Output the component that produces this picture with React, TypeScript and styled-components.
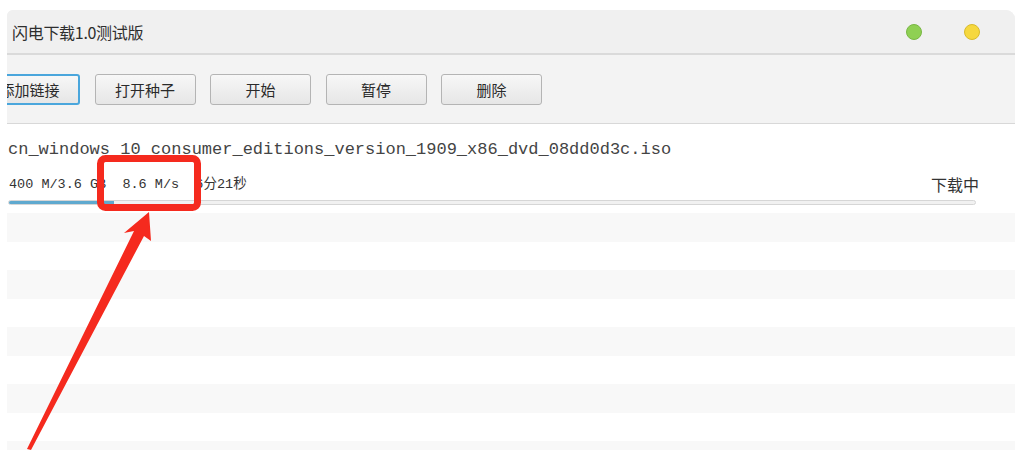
import * as React from 'react';
import styled, { createGlobalStyle } from 'styled-components';

const GlobalStyle = createGlobalStyle`
    html, body {
        margin: 0;
        padding: 0;
        background: #fff;
    }
    body {
        font-family: "Noto Sans CJK SC", "Liberation Sans", sans-serif;
    }
`;

const Page = styled.div`
    position: relative;
    width: 1023px;
    height: 450px;
    padding: 10px 0 0 7px;
    box-sizing: border-box;
    overflow: hidden;
`;

const Window = styled.div`
    width: 1008px;
    height: 440px;
    display: flex;
    flex-direction: column;
    background: #f2f2f2;
    border-radius: 6px 9px 0 0;
    overflow: hidden;
`;

const TitleBar = styled.div`
    height: 43px;
    flex: none;
    display: flex;
    align-items: center;
    justify-content: space-between;
    padding: 0 35px 0 5px;
    border-bottom: 2px solid #dadada;
    background: #f0f0f0;
`;

const Title = styled.div`
    font-size: 16px;
    color: #2e2e2e;
    letter-spacing: -0.3px;
`;

const Lights = styled.div`
    display: flex;
    gap: 42px;
`;

const Light = styled.span<{ $fill: string; $edge: string }>`
    width: 14px;
    height: 14px;
    border-radius: 50%;
    background: ${p => p.$fill};
    border: 1px solid ${p => p.$edge};
`;

const Toolbar = styled.div`
    height: 69px;
    flex: none;
    display: flex;
    align-items: flex-start;
    gap: 14.5px;
    padding-top: 19px;
    box-sizing: border-box;
    border-bottom: 1px solid #d8d8d8;
    background: #f3f3f3;
`;

const Button = styled.button<{ $focused?: boolean; $offset?: number }>`
    width: 101px;
    height: 31px;
    flex: none;
    margin-left: ${p => p.$offset || 0}px;
    border-radius: 3px;
    border: ${p => (p.$focused ? '2px solid #4aa6dc' : '1px solid #b4b4b4')};
    background: linear-gradient(#f7f7f7, #e6e6e6);
    font-family: "Noto Sans CJK SC", sans-serif;
    font-size: 15px;
    color: #2a2a2a;
    padding: 0;
    line-height: 1;
`;

const List = styled.div`
    flex: 1;
    background: #fff;
    display: flex;
    flex-direction: column;
`;

const Item = styled.div`
    height: 89px;
    flex: none;
    padding: 16px 39px 0 1px;
    box-sizing: border-box;
`;

const FileName = styled.div`
    font-family: "Liberation Mono", monospace;
    font-size: 17px;
    line-height: 20px;
    color: #444;
    white-space: pre;
`;

const StatusRow = styled.div`
    display: flex;
    align-items: flex-end;
    justify-content: space-between;
    margin-top: 14px;
    padding-left: 1px;
`;

const Stats = styled.div`
    font-family: "Liberation Mono", "Noto Sans CJK SC", monospace;
    font-size: 13.5px;
    line-height: 18px;
    color: #333;
    white-space: pre;
`;

const State = styled.div`
    font-size: 16px;
    line-height: 20px;
    color: #333;
    margin-right: -3px;
`;

const Track = styled.div`
    margin-top: 6px;
    height: 3px;
    border: 1px solid #d6d6d6;
    border-radius: 3px;
    background: #f1f1f1;
    overflow: hidden;
`;

const Fill = styled.div`
    height: 100%;
    background: #5fa9cf;
`;

const Stripe = styled.div<{ $shade: boolean }>`
    height: 28.5px;
    flex: none;
    background: ${p => (p.$shade ? '#f8f8f8' : '#fff')};
`;

const Overlay = styled.svg`
    position: absolute;
    left: 0;
    top: 0;
    pointer-events: none;
`;

const buttons = ['打开种子', '开始', '暂停', '删除'];

export default function App() {
    const progress = 400 / (3.6 * 1024);
    return (
        <Page>
            <GlobalStyle />
            <Window>
                <TitleBar>
                    <Title>闪电下载1.0测试版</Title>
                    <Lights>
                        <Light $fill="#8fd053" $edge="#79b744" />
                        <Light $fill="#f6d83e" $edge="#d8bb2c" />
                    </Lights>
                </TitleBar>
                <Toolbar>
                    <Button $focused={true} $offset={-28}>添加链接</Button>
                    {buttons.map(b => <Button key={b}>{b}</Button>)}
                </Toolbar>
                <List>
                    <Item>
                        <FileName>cn_windows_10_consumer_editions_version_1909_x86_dvd_08dd0d3c.iso</FileName>
                        <StatusRow>
                            <Stats>{'400 M/3.6 GB  8.6 M/s  6分21秒'}</Stats>
                            <State>下载中</State>
                        </StatusRow>
                        <Track>
                            <Fill style={{ width: `${progress * 100}%` }} />
                        </Track>
                    </Item>
                    {Array.from({ length: 9 }, (_, i) => <Stripe key={i} $shade={i % 2 === 0} />)}
                </List>
            </Window>
            <Overlay width="1023" height="450" viewBox="0 0 1023 450">
                <rect x="100.5" y="158.5" width="97" height="49" rx="5" fill="none" stroke="#f52a1e" strokeWidth="7" />
                <polygon
                    points="149,212 151,241 144,236 31,450 27,449 134,231 124,233"
                    fill="#f52a1e"
                />
            </Overlay>
        </Page>
    );
}
